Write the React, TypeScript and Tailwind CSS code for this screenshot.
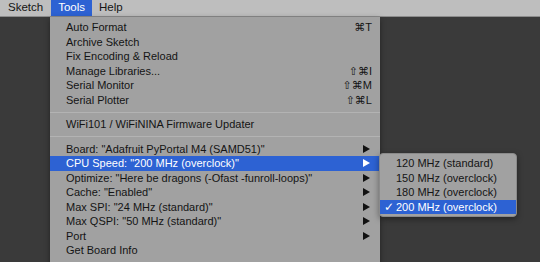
const font = { fontFamily: '"Liberation Sans", "DejaVu Sans", sans-serif' }

const Arrow = ({ white }: { white?: boolean }) => (
      <svg width="7" height="8" viewBox="0 0 7 8" className="shrink-0">
            <path d="M0 0 L7 4 L0 8 Z" fill={white ? "#ffffff" : "#111111"} />
      </svg>
)

type Item = { label?: string; shortcut?: string; sub?: boolean; active?: boolean; sep?: boolean }

const items: Item[] = [
      { label: "Auto Format", shortcut: "⌘T" },
      { label: "Archive Sketch" },
      { label: "Fix Encoding & Reload" },
      { label: "Manage Libraries...", shortcut: "⇧⌘I" },
      { label: "Serial Monitor", shortcut: "⇧⌘M" },
      { label: "Serial Plotter", shortcut: "⇧⌘L" },
      { sep: true },
      { label: "WiFi101 / WiFiNINA Firmware Updater" },
      { sep: true },
      { label: 'Board: "Adafruit PyPortal M4 (SAMD51)"', sub: true },
      { label: 'CPU Speed: "200 MHz (overclock)"', sub: true, active: true },
      { label: 'Optimize: "Here be dragons (-Ofast -funroll-loops)"', sub: true },
      { label: 'Cache: "Enabled"', sub: true },
      { label: 'Max SPI: "24 MHz (standard)"', sub: true },
      { label: 'Max QSPI: "50 MHz (standard)"', sub: true },
      { label: "Port", sub: true },
      { label: "Get Board Info" },
]

const speeds = ["120 MHz (standard)", "150 MHz (overclock)", "180 MHz (overclock)", "200 MHz (overclock)"]

const App = () => {
      return (
            <div className="relative w-[540px] h-[262px] overflow-hidden bg-[#3a3a3a] text-[11px] text-[#141414]" style={font}>
                  <div className="flex h-[17px] items-center bg-[#bebebe] border-b border-[#8c8c8c] text-[11.5px]">
                        <div className="px-[8px] h-full flex items-center">Sketch</div>
                        <div className="px-[7px] h-full flex items-center bg-[#2d62d3] text-white">Tools</div>
                        <div className="px-[7px] h-full flex items-center">Help</div>
                  </div>

                  {/* Tools dropdown */}
                  <div className="absolute left-[50px] top-[17px] w-[330px] h-[260px] bg-[#a1a1a1] pt-[3px] shadow-[0_2px_6px_rgba(0,0,0,0.4)]">
                        {items.map((it, i) =>
                              it.sep ? (
                                    <div key={i} className="h-[10px] flex items-center">
                                          <div className="w-full h-px bg-[#b3b3b3]" />
                                    </div>
                              ) : (
                                    <div
                                          key={i}
                                          className={`h-[14.5px] flex items-center justify-between pl-[16px] ${it.sub ? "pr-[10px]" : "pr-[8px]"} ${it.active ? "bg-[#2d62d3] text-white" : ""}`}
                                    >
                                          <span className="whitespace-nowrap">{it.label}</span>
                                          {it.shortcut && <span className="whitespace-nowrap">{it.shortcut}</span>}
                                          {it.sub && <Arrow white={it.active} />}
                                    </div>
                              )
                        )}
                  </div>

                  {/* CPU speed submenu */}
                  <div className="absolute left-[379px] top-[153px] w-[138px] h-[64px] rounded-[4px] bg-[#a1a1a1] border border-[#8a8a8a] py-[2px] shadow-[0_2px_6px_rgba(0,0,0,0.4)]">
                        {speeds.map((s, i) => (
                              <div
                                    key={i}
                                    className={`h-[14.5px] flex items-center pl-[4px] ${i === 3 ? "bg-[#2d62d3] text-white" : ""}`}
                              >
                                    <span className="w-[12px] text-[12px] leading-none" style={{ fontFamily: '"DejaVu Sans", sans-serif' }}>{i === 3 ? "✓" : ""}</span>
                                    <span className="whitespace-nowrap">{s}</span>
                              </div>
                        ))}
                  </div>
            </div>
      )
}

export default App
